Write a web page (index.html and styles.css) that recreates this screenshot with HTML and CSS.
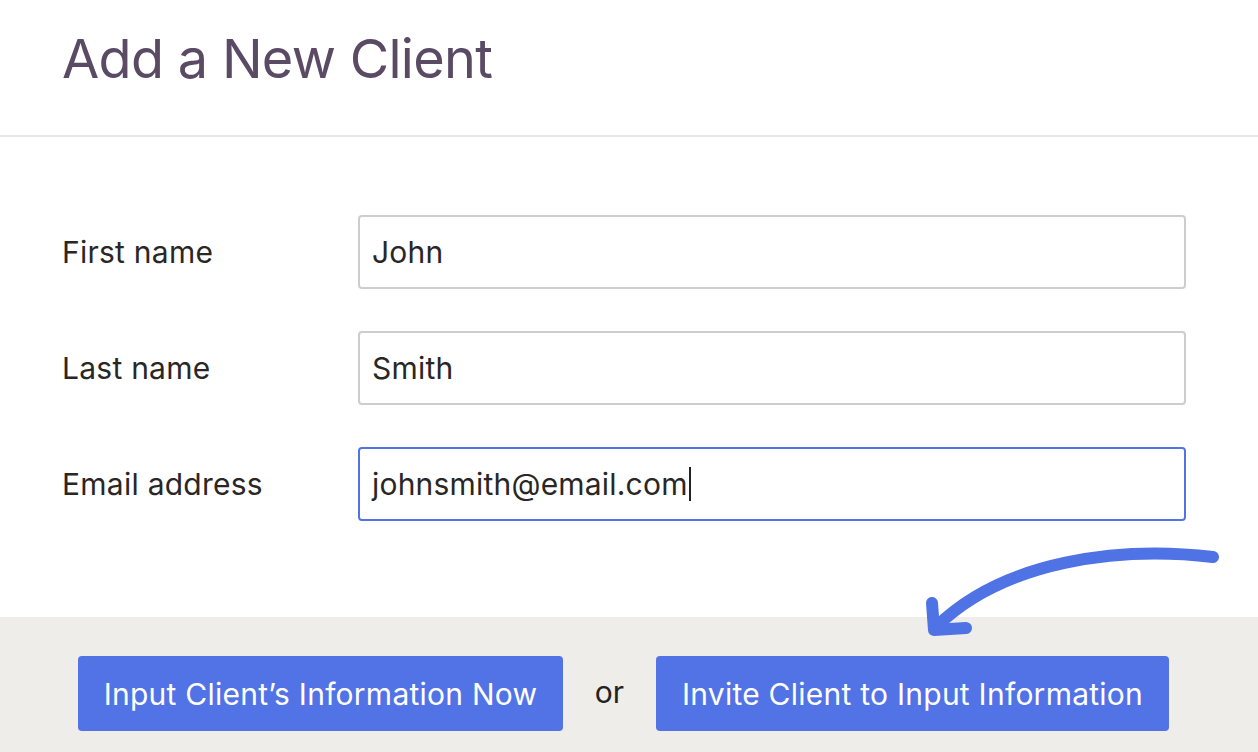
FILE: index.html
```html
<!DOCTYPE html>
<html lang="en">
<head>
    <meta charset="UTF-8">
    <meta name="viewport" content="width=device-width, initial-scale=1.0">
    <title>Add a New Client</title>
    <link rel="stylesheet" href="styles.css">
</head>
<body>
    <div class="page">
        <header class="header">
            <h1>Add a New Client</h1>
        </header>

        <!-- Formulaire client -->
        <form class="form">
            <div class="row">
                <label for="first">First name</label>
                <div class="field">John</div>
            </div>
            <div class="row">
                <label for="last">Last name</label>
                <div class="field">Smith</div>
            </div>
            <div class="row">
                <label for="email">Email address</label>
                <div class="field focused">johnsmith@email.com<span class="caret"></span></div>
            </div>
        </form>

        <!-- Actions -->
        <div class="footer">
            <button class="btn btn-now" type="button">Input Client’s Information Now</button>
            <span class="or">or</span>
            <button class="btn btn-invite" type="button">Invite Client to Input Information</button>
        </div>

        <svg class="arrow" width="358" height="130" viewBox="900 530 358 130">
            <g fill="none" stroke="#4f72e4" stroke-width="12" stroke-linecap="round" stroke-linejoin="round">
                <path d="M1213 557 C1120 546 1005 560 937 626"/>
                <path d="M932 603 L934 630 L966 628"/>
            </g>
        </svg>
    </div>
</body>
</html>
```

FILE: styles.css
```css
body {
    margin: 0;
    padding: 0;
    font-family: Inter, "Noto Sans", Arial, sans-serif;
    background-color: #fff;
}
.page {
    position: relative;
    width: 1258px;
    height: 752px;
    overflow: hidden;
}
.header {
    height: 137px;
    border-bottom: 2px solid #e6e6e6;
    padding-left: 62px;
    box-sizing: border-box;
}
.header h1 {
    margin: 0;
    padding-top: 26px;
    font-size: 54px;
    font-weight: 400;
    color: #5a4a64;
    letter-spacing: -0.7px;
}
.form {
    padding: 78px 72px 0 62px;
    display: flex;
    flex-direction: column;
    gap: 42px;
    height: 480px;
    box-sizing: border-box;
}
.row {
    display: flex;
    align-items: center;
}
.row label {
    width: 296px;
    font-size: 30px;
    letter-spacing: 0.25px;
    color: #2a2626;
}
.field {
    flex: 1;
    height: 74px;
    box-sizing: border-box;
    border: 2px solid #cdcdcd;
    border-radius: 4px;
    padding-left: 12px;
    display: flex;
    align-items: center;
    font-size: 30px;
    letter-spacing: 0.2px;
    color: #2a2626;
}
.field.focused {
    border-color: #5174e2;
}
.caret {
    display: inline-block;
    width: 2px;
    height: 34px;
    background-color: #222;
    margin-left: 1px;
}
.footer {
    height: 135px;
    background-color: #eeede9;
    padding: 39px 0 0 78px;
    box-sizing: border-box;
    display: flex;
    align-items: flex-start;
}
.btn {
    height: 75px;
    border: none;
    border-radius: 4px;
    background-color: #5173e6;
    color: #fff;
    font-family: Inter, "Noto Sans", Arial, sans-serif;
    font-size: 30px;
    letter-spacing: 0.25px;
    padding: 0;
    cursor: pointer;
}
.btn-now {
    width: 485px;
}
.btn-invite {
    width: 513px;
}
.or {
    width: 93px;
    line-height: 72px;
    text-align: center;
    font-size: 30px;
    color: #222;
}
.arrow {
    position: absolute;
    left: 900px;
    top: 530px;
}
```
